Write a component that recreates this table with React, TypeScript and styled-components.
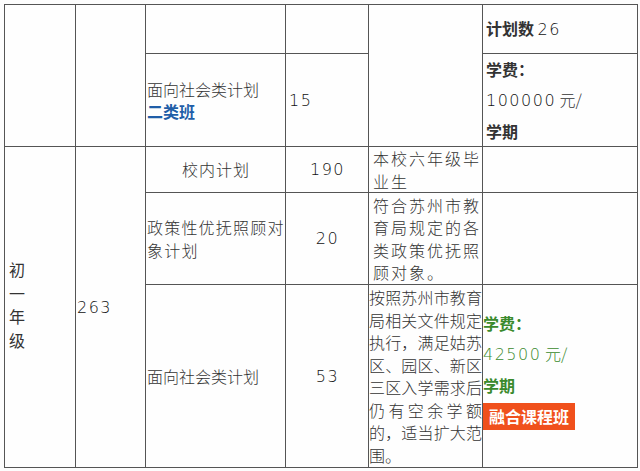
import styled, { createGlobalStyle } from "styled-components";

const GlobalStyle = createGlobalStyle`
  html, body {
    margin: 0;
    padding: 0;
    background: #fdfdfd;
  }
  body {
    font-family: "Noto Sans CJK SC", "Noto Sans", sans-serif;
    color: #333;
  }
`;

const Page = styled.div`
  padding: 4px 0 0 4px;
`;

const Table = styled.table`
  width: 633px;
  table-layout: fixed;
  border-collapse: collapse;
  border: 1px solid #555;
  font-size: 16px;
  font-weight: 300;
  line-height: 22.5px;
  background: #fefefe;
`;

const Row = styled.tr<{ $h: number }>`
  height: ${(p) => p.$h}px;
`;

const Cell = styled.td<{
  $align?: "left" | "center";
  $pad?: number;
  $spacing?: number;
  $justify?: boolean;
}>`
  border: 1px solid #555;
  padding: 0 0 0 ${(p) => p.$pad ?? 1}px;
  vertical-align: middle;
  text-align: ${(p) => (p.$justify ? "justify" : p.$align ?? "left")};
  letter-spacing: ${(p) => p.$spacing ?? 0}px;
  overflow: hidden;
  word-break: break-all;
`;

const Vertical = styled.div`
  width: 18px;
  line-height: 23.5px;
  padding: 0 0 4px 2px;
  font-weight: 400;
`;

const Hand = styled.span<{ $color?: string }>`
  font-family: "DejaVu Sans", sans-serif;
  font-weight: 200;
  font-size: 16px;
  letter-spacing: 1.5px;
  color: ${(p) => p.$color ?? "#111"};
`;

const Tag = styled.span<{ $color?: string }>`
  font-weight: 700;
  color: ${(p) => p.$color ?? "#333"};
`;

const Fee = styled.div<{ $color?: string; $pad?: number }>`
  line-height: 30px;
  padding-bottom: ${(p) => p.$pad ?? 0}px;
  color: ${(p) => p.$color ?? "#333"};
`;

const Badge = styled.span`
  display: inline-block;
  margin-top: 3px;
  padding: 0 6px 0 6px;
  height: 27px;
  line-height: 27px;
  background: #f0501c;
  color: #fff;
  font-weight: 700;
`;

const green = "#3a8a2c";

export default function App() {
  return (
    <Page>
      <GlobalStyle />
      <Table>
        <colgroup>
          <col style={{ width: 71 }} />
          <col style={{ width: 70 }} />
          <col style={{ width: 140 }} />
          <col style={{ width: 83 }} />
          <col style={{ width: 114 }} />
          <col style={{ width: 155 }} />
        </colgroup>
        <tbody>
          <Row $h={49}>
            <Cell rowSpan={2} />
            <Cell rowSpan={2} />
            <Cell />
            <Cell />
            <Cell rowSpan={2} />
            <Cell $pad={3}>
              <Tag>计划数</Tag> <Hand>26</Hand>
            </Cell>
          </Row>
          <Row $h={92}>
            <Cell>
              面向社会类计划
              <br />
              <Tag $color="#1f5ea8">二类班</Tag>
            </Cell>
            <Cell $pad={3}>
              <Hand>15</Hand>
            </Cell>
            <Cell $pad={3}>
              <Fee>
                <Tag>学费：</Tag>
              </Fee>
              <Fee>
                <Hand>100000</Hand> 元/
              </Fee>
              <Fee>
                <Tag>学期</Tag>
              </Fee>
            </Cell>
          </Row>
          <Row $h={46}>
            <Cell rowSpan={3} $pad={2}>
              <Vertical>初一年级</Vertical>
            </Cell>
            <Cell rowSpan={3}>
              <Hand>263</Hand>
            </Cell>
            <Cell $align="center" $spacing={1}>
              校内计划
            </Cell>
            <Cell $align="center">
              <Hand>190</Hand>
            </Cell>
            <Cell $pad={4} $spacing={2}>
              本校六年级毕业生
            </Cell>
            <Cell />
          </Row>
          <Row $h={92}>
            <Cell $spacing={1.2}>政策性优抚照顾对象计划</Cell>
            <Cell $align="center">
              <Hand>20</Hand>
            </Cell>
            <Cell $pad={4} $spacing={2}>
              符合苏州市教育局规定的各类政策优抚照顾对象。
            </Cell>
            <Cell />
          </Row>
          <Row $h={183}>
            <Cell>面向社会类计划</Cell>
            <Cell $align="center">
              <Hand>53</Hand>
            </Cell>
            <Cell $pad={0} $justify>
              按照苏州市教育局相关文件规定执行，满足姑苏区、园区、新区三区入学需求后仍有空余学额的，适当扩大范围。
            </Cell>
            <Cell $pad={0}>
              <Fee $color={green}>
                <Tag $color={green}>学费：</Tag>
              </Fee>
              <Fee $color={green}>
                <Hand $color={green}>42500</Hand> 元/
              </Fee>
              <Fee $color={green}>
                <Tag $color={green}>学期</Tag>
              </Fee>
              <Fee $pad={14}>
                <Badge>融合课程班</Badge>
              </Fee>
            </Cell>
          </Row>
        </tbody>
      </Table>
    </Page>
  );
}
